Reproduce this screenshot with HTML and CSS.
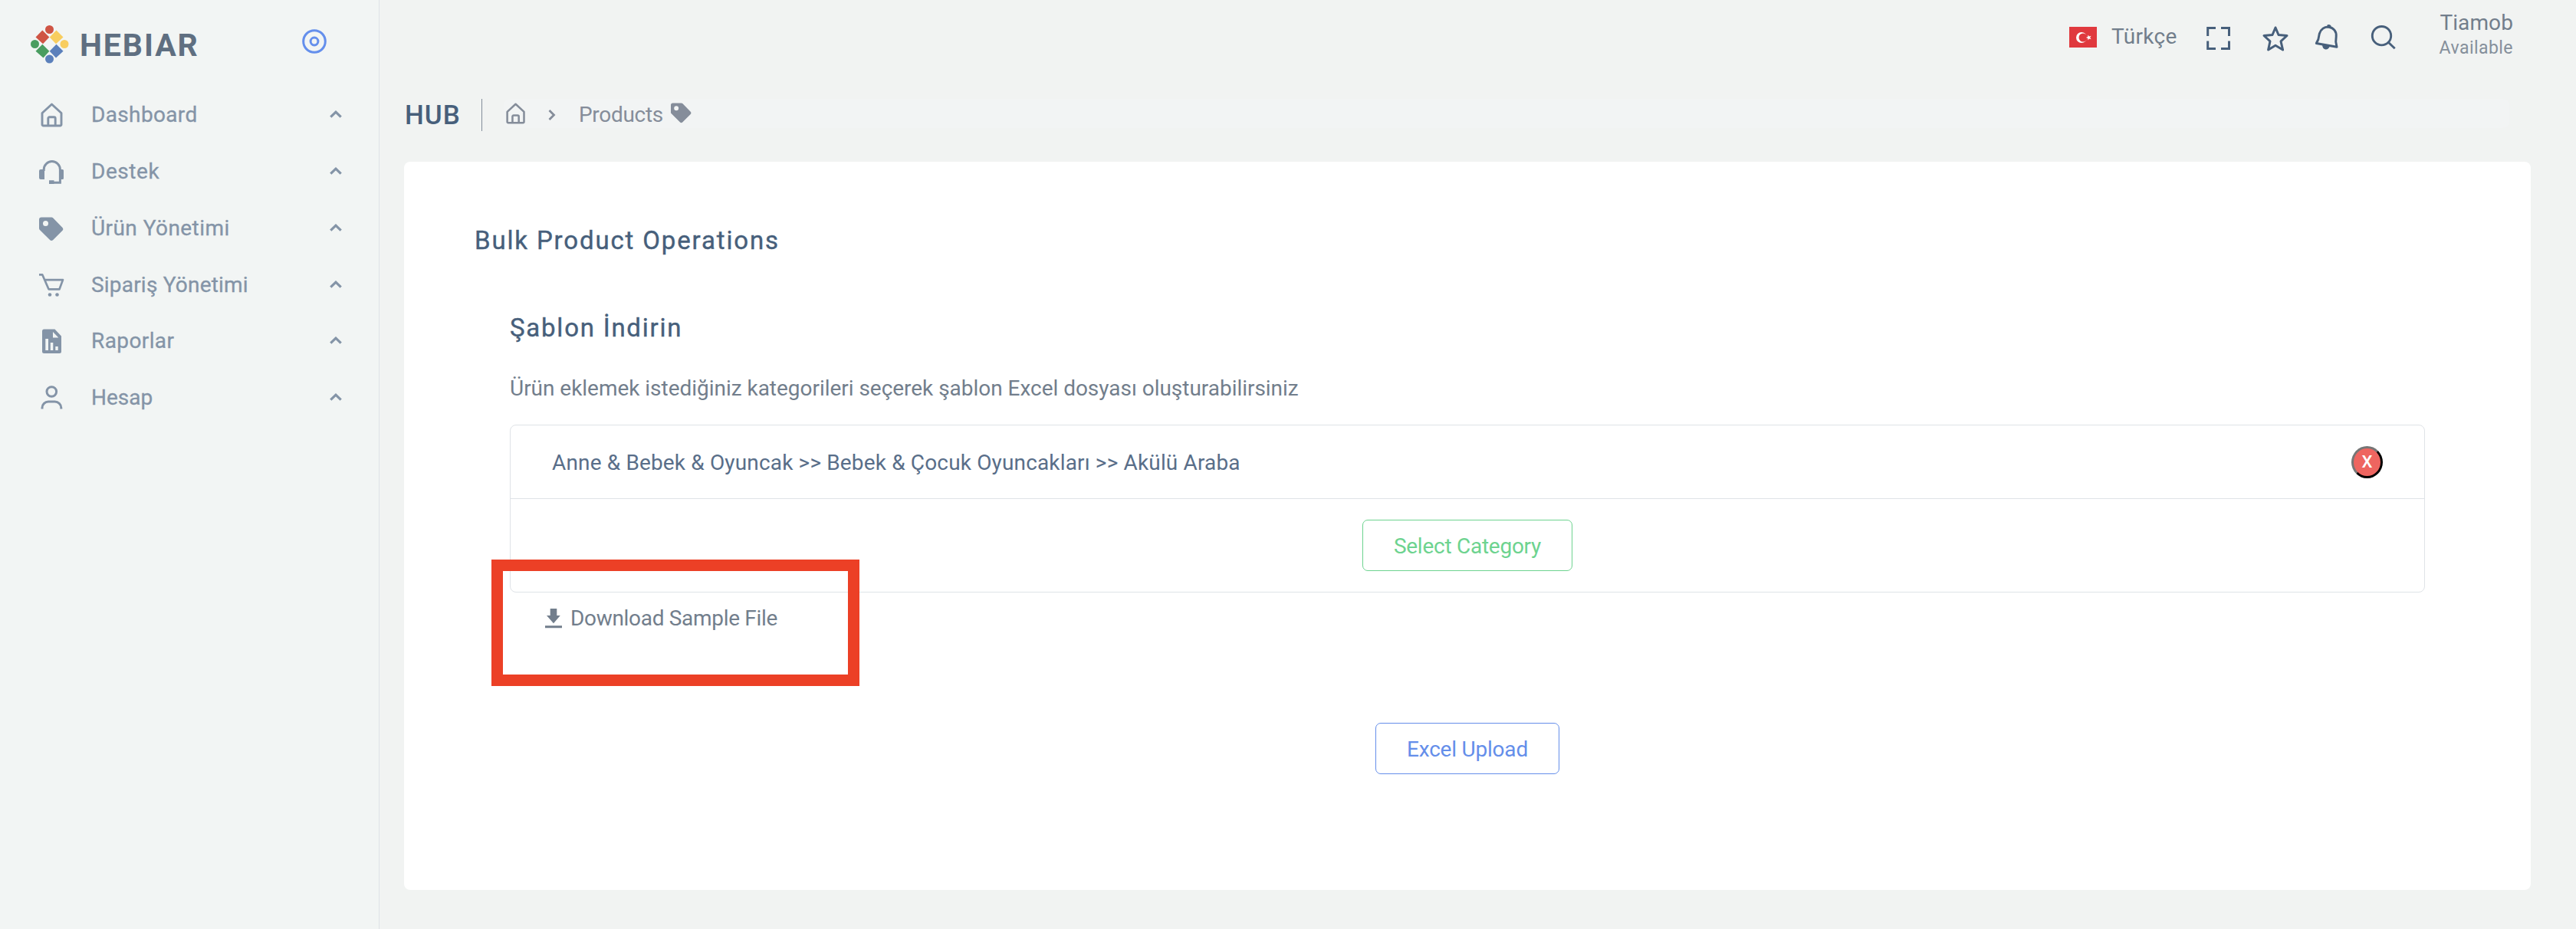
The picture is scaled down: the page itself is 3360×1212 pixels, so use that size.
FILE: index.html
```html
<!DOCTYPE html>
<html lang="tr">
<head>
<meta charset="utf-8">
<title>Hebiar – Bulk Product Operations</title>
<link rel="stylesheet" href="styles.css">
</head>
<body>
<svg class="defs" aria-hidden="true">
  <symbol id="home" viewBox="0 0 32 34"><path d="M3 14.5 15.5 3 28 14.5V29.5a1.5 1.5 0 0 1-1.5 1.5h-22A1.5 1.5 0 0 1 3 29.500Z M10.800 31V21.500a1.700 1.700 0 0 1 1.700-1.700h6a1.700 1.700 0 0 1 1.700 1.700V31" fill="none" stroke="currentColor" stroke-width="2.900" stroke-linejoin="round"/></symbol>
  <symbol id="tag" viewBox="0 0 32 32"><path fill="currentColor" fill-rule="evenodd" d="M3 .5H16.300q1 0 1.800.8L30.500 14q1.600 2 0 3.800L18 30.200q-2 1.600-3.700 0L1.200 17.300Q0 16.300 0 15V3.500Q0 .5 3 .5ZM8.500 5a3.500 3.500 0 1 0 0 7a3.500 3.500 0 1 0 0-7Z"/></symbol>
  <symbol id="up" viewBox="0 0 16 10"><path d="M1.300 8.700 8 2.200l6.700 6.500" fill="none" stroke="currentColor" stroke-width="3.200"/></symbol>
</svg>

<aside class="sidebar">
  <header class="brand">
    <svg class="logo" viewBox="0 0 50 50">
      <path fill="#cf5444" d="M15.300 6.500 24.300 15.500 16 24.300 6.500 15.500Z"/><circle fill="#cf5444" cx="24.500" cy="5.500" r="5.500"/>
      <path fill="#f8cd5f" d="M33.500 6.500 42.500 15.500 33 24.300 24.700 15.500Z"/><circle fill="#f8cd5f" cx="44" cy="24.500" r="5.500"/>
      <path fill="#4a9d60" d="M15.300 24.700 24.300 33.700 16.500 42.500 6.500 33.700Z"/><circle fill="#4a9d60" cx="5.500" cy="24.500" r="5.500"/>
      <path fill="#5b80bb" d="M33.500 24.700 42.500 33.700 33 42.500 24.700 33.700Z"/><circle fill="#5b80bb" cx="24.500" cy="44" r="5.500"/>
    </svg>
    <span class="brand-name">HEBIAR</span>
    <svg class="toggle" viewBox="0 0 32 32"><g fill="none" stroke="currentColor" stroke-width="3"><circle cx="16" cy="16" r="14.300"/><circle cx="16" cy="16" r="4.900"/></g></svg>
  </header>
  <nav class="menu">
    <a class="item"><svg class="ico" viewBox="-1 0 34 34"><use href="#home" width="32" height="34"/></svg><span class="n1">Dashboard</span><svg class="up"><use href="#up"/></svg></a>
    <a class="item"><svg class="ico" viewBox="0 -1 34 34"><path d="M6.200 15V13.200a10.600 10.600 0 0 1 21.200 0V30.300H14" fill="none" stroke="currentColor" stroke-width="3"/><path fill="currentColor" d="M2 13H7V26H2a2 2 0 0 1-2-2V15a2 2 0 0 1 2-2ZM26 13h4.500a1.500 1.500 0 0 1 1.500 1.500v10a1.500 1.500 0 0 1-1.500 1.500H26ZM13 27.300h6.500V32H13Z"/></svg><span class="n2">Destek</span><svg class="up"><use href="#up"/></svg></a>
    <a class="item"><svg class="ico" viewBox="0 -2 34 34"><use href="#tag" width="32" height="32"/></svg><span class="n3">Ürün Yönetimi</span><svg class="up"><use href="#up"/></svg></a>
    <a class="item"><svg class="ico" viewBox="0 0 34 34"><path d="M0 3.300H4.200L12.500 22.300H26.500L31 10.100H7" fill="none" stroke="currentColor" stroke-width="2.700" stroke-linejoin="round"/><g fill="currentColor"><circle cx="14" cy="29.500" r="2.300"/><circle cx="23.500" cy="29.500" r="2.300"/></g></svg><span class="n4">Sipariş Yönetimi</span><svg class="up"><use href="#up"/></svg></a>
    <a class="item"><svg class="ico" viewBox="0 -1 34 34"><path fill="currentColor" fill-rule="evenodd" d="M6.500.5H20.500L29 9.500V29.500a2.500 2.500 0 0 1-2.500 2.500h-20A2.500 2.500 0 0 1 4 29.500V3A2.500 2.500 0 0 1 6.500.5ZM18 4v7.500h7.300ZM8.300 13v15H12V13ZM14.800 18v10h3.500V18ZM21.300 23v5h3.400v-5Z"/></svg><span class="n5">Raporlar</span><svg class="up"><use href="#up"/></svg></a>
    <a class="item"><svg class="ico" viewBox="0 -.5 34 34"><g fill="none" stroke="currentColor" stroke-width="3"><circle cx="16.300" cy="8.500" r="6.300"/><path d="M4 31V29.500c0-4.500 3.700-8 8-8h8.600c4.300 0 8.200 3.500 8.200 8V31"/></g></svg><span class="n6">Hesap</span><svg class="up"><use href="#up"/></svg></a>
  </nav>
</aside>

<main class="main">
  <header class="topbar">
    <svg class="flag" viewBox="0 0 36 27"><path fill="#e0393e" d="M0 0h36v27H0z"/><circle cx="16" cy="14" r="7" fill="#fff"/><circle cx="18" cy="14" r="5.500" fill="#e0393e"/><path fill="#fff" d="m21.800 14 2.500-.9.100-2.700 1.600 2.100 2.600-.7-1.500 2.200 1.500 2.200-2.600-.7-1.600 2.100-.1-2.700z"/></svg>
    <span class="lang">Türkçe</span>
    <svg class="tool" viewBox="0 0 36 36"><path d="M3.700 15V4.500H14M21 4.500H31.500V15M31.500 21.500V31.500H21M14 31.500H3.700V21.500" fill="none" stroke="currentColor" stroke-width="3"/></svg>
    <svg class="tool star" viewBox="0 0 36 36"><path d="M18 4 22 13.500 33 14.500 25 21.800 27.600 33 18 27.300 8.600 33 11 21.800 3 14.500 14 13.500Z" fill="none" stroke="currentColor" stroke-width="3" stroke-linejoin="round"/></svg>
    <svg class="tool bell" viewBox="0 0 36 36"><path d="M4.300 24.500 6.800 19.500 8.300 12C10 6 15 2.600 20.500 3.200C27 4 30.800 9.500 30.200 15.500L29.700 22.500 31 29.300Z" fill="none" stroke="currentColor" stroke-width="2.900" stroke-linejoin="round"/><path fill="currentColor" d="M18.500.6q3-1.600 5 1l-.5 3h-5ZM12 26l10 1.800q-1.500 5-5.800 4.700Q12 31.500 12 26Z"/></svg>
    <svg class="tool" viewBox="0 0 36 36"><g fill="none" stroke="currentColor" stroke-width="2.900"><circle cx="15.500" cy="14.700" r="12.200"/><path d="m24 23 8.700 8.300"/></g></svg>
    <div class="user"><span class="user-name">Tiamob</span><span class="user-state">Available</span></div>
  </header>

  <div class="crumbs">
    <h2 class="hub">HUB</h2>
    <div class="trail">
      <svg class="c-home"><use href="#home"/></svg>
      <svg class="c-next" viewBox="0 0 10 16"><path d="m1.500 2 6 6-6 6" fill="none" stroke="currentColor" stroke-width="2.800"/></svg>
      <span class="c-text">Products</span>
      <svg class="c-tag"><use href="#tag"/></svg>
    </div>
  </div>

  <section class="card">
    <h4 class="title">Bulk Product Operations</h4>
    <div class="body">
      <h4 class="subtitle">Şablon İndirin</h4>
      <p class="desc">Ürün eklemek istediğiniz kategorileri seçerek şablon Excel dosyası oluşturabilirsiniz</p>
      <div class="list">
        <div class="row"><span class="path">Anne &amp; Bebek &amp; Oyuncak &gt;&gt; Bebek &amp; Çocuk Oyuncakları &gt;&gt; Akülü Araba</span><button class="remove">X</button></div>
        <div class="row pick"><button class="btn green">Select Category</button></div>
      </div>
      <div class="download">
        <svg class="dl" viewBox="0 0 22 26"><path fill="currentColor" d="M6.700 0h8.600v9h4.500L11 19.300 2 9h4.700ZM0 22.300h22V25.300H0Z"/></svg>
        <a class="dl-text">Download Sample File</a>
        <span class="highlight"></span>
      </div>
      <button class="btn blue">Excel Upload</button>
    </div>
  </section>
</main>
</body>
</html>
```
FILE: styles.css
```css
* { box-sizing: border-box; }
body {
  margin: 0;
  display: flex;
  height: 1212px;
  overflow: hidden;
  background: #f1f3f2;
  font: 400 28px/40px Roboto, sans-serif;
}
h2, h4, p { margin: 0; font-weight: 400; }
svg { display: block; flex: none; }
span, a { white-space: nowrap; }
button { font: inherit; padding: 0; }
.defs { position: absolute; width: 0; height: 0; }

/* Sidebar */
.sidebar {
  flex: none;
  width: 495px;
  border-right: 1px solid #dfe3e7;
  background: #f2f5f4;
}
.brand {
  display: flex;
  height: 112.500px;
  padding: 33px 68px 0 40px;
}
.logo { width: 50px; height: 50px; }
.brand-name {
  margin: 6px 0 0 14px;
  color: #5f6f81;
  font-size: 41px;
  font-weight: 700;
  letter-spacing: 1.900px;
}
.toggle { width: 32px; height: 32px; margin: 4.500px 0 0 auto; color: #648fec; }
.menu { color: #8494a7; }
.item {
  display: flex;
  align-items: center;
  height: 73.750px;
  padding: 0 48px 0 51px;
}
.item span { margin: 2px 0 0 34px; -webkit-text-stroke: .3px; }
.ico { width: 34px; height: 34px; margin-top: 2px; }
.up { width: 16px; height: 10px; margin: 0 0 0 auto; }
.n1 { letter-spacing: .350px; }
.n2 { letter-spacing: .550px; }
.n3 { letter-spacing: .430px; }
.n4 { letter-spacing: .200px; }
.n5 { letter-spacing: .400px; }
.n6 { letter-spacing: 0; }

/* Top bar */
.main { flex: 1; padding: 0 59px 0 32px; }
.topbar {
  display: flex;
  justify-content: flex-end;
  height: 129px;
  padding-right: 23px;
  color: #475f7b;
}
.flag { width: 36px; height: 27px; margin-top: 35px; }
.lang { width: 84px; margin: 28px 0 0 19px; color: #727e8c; letter-spacing: .300px; }
.tool { width: 36px; height: 36px; margin: 32px 0 0 38px; }
.star { margin-left: 38px; }
.bell { margin-left: 31px; }
.user {
  display: flex;
  flex-direction: column;
  align-items: flex-end;
  width: 98px;
  margin: 10px 0 0 53px;
  color: #727e8c;
}
.user-name { letter-spacing: .100px; }
.user-state { margin-top: -8px; padding-top: 1px; color: #858f9b; font-size: 23px; letter-spacing: .450px; }

/* Breadcrumbs */
.crumbs { display: flex; height: 82px; }
.hub {
  width: 102px;
  height: 42px;
  padding: 1px 0 0 1px;
  border-right: 1px solid #828d99;
  color: #475f7b;
  font-size: 35px;
  font-weight: 500;
  line-height: 42px;
  letter-spacing: 1px;
}
.trail {
  display: flex;
  flex: 1;
  align-items: flex-start;
  height: 38px;
  margin: 0 28px 0 28px;
  border-radius: 8px;
  background: #f2f4f4;
  color: #858d9a;
}
.c-home { width: 28px; height: 30px; margin: 4px 0 0 2px; }
.c-next { width: 10px; height: 16px; margin: 13px 0 0 28px; }
.c-text { width: 108px; margin: 1px 0 0 30px; letter-spacing: -.290px; }
.c-tag { width: 27px; height: 27px; margin: 4.500px 0 0 12px; }

/* Card */
.card {
  height: 950px;
  padding: 83px 138px 0 92px;
  border-radius: 8px;
  background: #fff;
}
.title, .subtitle { color: #475f7b; font-size: 33px; -webkit-text-stroke: .4px; }
.title { letter-spacing: 1.850px; }
.body { padding-left: 46px; }
.subtitle { margin-top: 74px; letter-spacing: 1.760px; }
.desc { margin-top: 39px; color: #727e8c; letter-spacing: -.030px; }
.list {
  height: 219px;
  margin-top: 27px;
  border: 1px solid #dfe3e7;
  border-radius: 8px;
}
.row {
  display: flex;
  align-items: center;
  justify-content: space-between;
  height: 96px;
  padding: 0 54px;
  border-bottom: 1px solid #dfe3e7;
}
.row.pick { justify-content: center; height: 121px; border: 0; }
.path { margin-top: 2px; color: #596e89; letter-spacing: .150px; }
.remove {
  width: 41px;
  height: 42px;
  border: 3px outset #222;
  border-color: #767676 #1e1e1e #1e1e1e #767676;
  border-radius: 50%;
  background: #ee6560;
  color: #fff;
  font-size: 22px;
  font-weight: 500;
  line-height: 34px;
}
.btn {
  display: block;
  height: 67px;
  padding-top: 2px;
  border: 1px solid;
  border-radius: 7px;
  background: #fff;
}
.green { width: 274px; color: #6dd38f; letter-spacing: -.260px; }
.blue { width: 240px; margin: 116px auto 0; color: #648eea; letter-spacing: -.210px; }
.download {
  position: relative;
  display: flex;
  height: 40px;
  margin-top: 14px;
  padding-left: 46px;
  color: #727e8c;
}
.dl { width: 22px; height: 26px; margin-top: 7px; }
.dl-text { margin-left: 11px; letter-spacing: -.310px; }

/* Callout frame over the download link */
.highlight {
  position: absolute;
  top: -57px;
  left: -24px;
  width: 480px;
  height: 165px;
  border: 15px solid #ec4026;
}
```
